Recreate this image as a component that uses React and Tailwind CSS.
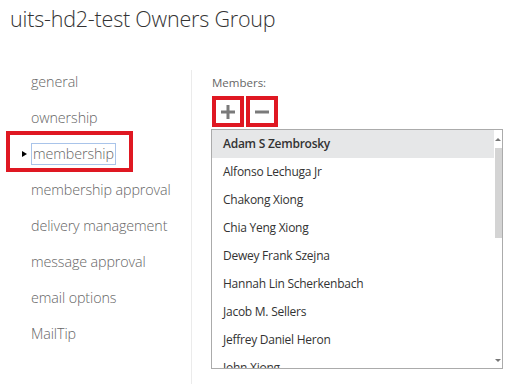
import React from "react";

const members = [
  "Adam S Zembrosky",
  "Alfonso Lechuga Jr",
  "Chakong Xiong",
  "Chia Yeng Xiong",
  "Dewey Frank Szejna",
  "Hannah Lin Scherkenbach",
  "Jacob M. Sellers",
  "Jeffrey Daniel Heron",
  "John Xiong",
];

const nav = [
  "general",
  "ownership",
  "membership",
  "membership approval",
  "delivery management",
  "message approval",
  "email options",
  "MailTip",
];

export default function App() {
  return (
    <div className="w-[516px] h-[384px] bg-white overflow-hidden relative font-['Open_Sans','Noto_Sans',sans-serif]">
      <div className="h-[70px] pl-[10px] pt-[4px]">
        <div className="text-[21.5px] leading-[30px] font-light text-[#333] tracking-[-0.2px]">
          uits-hd2-test Owners Group
        </div>
      </div>
      <div className="flex h-[314px]">
        <div className="w-[192px] border-r border-[#ebebeb] flex flex-col gap-[12px]">
          {nav.map((n) => (
            <div key={n} className="relative h-[24px] flex items-center pl-[31px] text-[14.3px] tracking-[-0.1px] font-light text-[#666]">
              {n === "membership" ? (
                <>
                  <div className="absolute left-[6px] top-[-11px] w-[127px] h-[41px] border-[4px] border-[#df1822]" />
                  <div className="absolute left-[22px] top-[9px] w-0 h-0 border-l-[5px] border-l-black border-y-[3px] border-y-transparent" />
                  <span className="border border-[#a9c4ea] h-[22px] leading-[19px] px-[1px]">{n}</span>
                </>
              ) : (
                n
              )}
            </div>
          ))}
        </div>
        <div className="flex-1 pl-[19px] pt-[5px]">
          <div className="text-[11.5px] leading-[16px] text-[#666] pl-[1px]">Members:</div>
          <div className="flex gap-[2px] mt-[5px] pl-[1px]">
            <div className="w-[32px] h-[31px] border-[4px] border-[#df1822] flex items-center justify-center">
              <svg width="16" height="16" viewBox="0 0 16 16">
                <path d="M8 1v14M1 8h14" stroke="#7a7a7a" strokeWidth="3" />
              </svg>
            </div>
            <div className="w-[32px] h-[31px] border-[4px] border-[#df1822] flex items-center justify-center">
              <svg width="16" height="16" viewBox="0 0 16 16">
                <path d="M1 8h14" stroke="#7a7a7a" strokeWidth="3" />
              </svg>
            </div>
          </div>
          <div className="mt-[2px] w-[292px] h-[240px] border border-[#ababab] flex overflow-hidden">
            <div className="flex-1 flex flex-col overflow-hidden">
              {members.map((m, i) => (
                <div
                  key={m}
                  className={`h-[28px] shrink-0 flex items-center pl-[11px] text-[12px] tracking-[-0.25px] text-[#333] ${
                    i === 0 ? "bg-[#e6e7e8] font-semibold" : ""
                  }`}
                >
                  {m}
                </div>
              ))}
            </div>
            <div className="w-[8px] flex flex-col items-center">
              <div className="h-[18px] flex items-center justify-center">
                <div className="w-0 h-0 border-b-[3px] border-b-[#777] border-x-[3px] border-x-transparent" />
              </div>
              <div className="w-[7px] h-[90px] bg-[#d4d4d4]" />
              <div className="flex-1" />
              <div className="h-[16px] flex items-center justify-center">
                <div className="w-0 h-0 border-t-[3px] border-t-[#777] border-x-[3px] border-x-transparent" />
              </div>
            </div>
          </div>
        </div>
      </div>
    </div>
  );
}
